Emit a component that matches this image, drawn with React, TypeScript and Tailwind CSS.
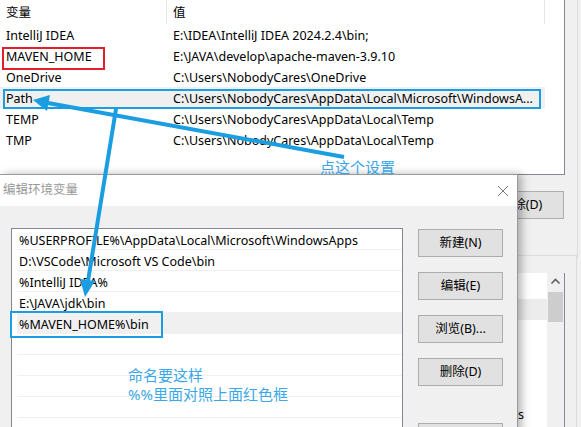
import React from 'react';

const font = { fontFamily: '"Noto Sans", "Noto Sans CJK SC", sans-serif' };

const vars = [
  { name: 'IntelliJ IDEA', value: 'E:\\IDEA\\IntelliJ IDEA 2024.2.4\\bin;' },
  { name: 'MAVEN_HOME', value: 'E:\\JAVA\\develop\\apache-maven-3.9.10' },
  { name: 'OneDrive', value: 'C:\\Users\\NobodyCares\\OneDrive' },
  { name: 'Path', value: 'C:\\Users\\NobodyCares\\AppData\\Local\\Microsoft\\WindowsA...' },
  { name: 'TEMP', value: 'C:\\Users\\NobodyCares\\AppData\\Local\\Temp' },
  { name: 'TMP', value: 'C:\\Users\\NobodyCares\\AppData\\Local\\Temp' },
];

const paths = [
  '%USERPROFILE%\\AppData\\Local\\Microsoft\\WindowsApps',
  'D:\\VSCode\\Microsoft VS Code\\bin',
  '%IntelliJ IDEA%',
  'E:\\JAVA\\jdk\\bin',
  '%MAVEN_HOME%\\bin',
  '',
  '',
  '',
  '',
];

function WinButton({ label }: { label?: string }) {
  return (
    <div className="w-[85px] h-[28px] shrink-0 flex items-center justify-center bg-[#e1e1e1] border border-[#adadad] text-[12.5px] text-black">
      {label}
    </div>
  );
}

function BackWindow() {
  return (
    <div className="absolute inset-0 bg-[#f0f0f0]">
      {/* user variables list */}
      <div className="absolute left-0 top-0 w-[565px] h-[175px] bg-white border-r border-b border-[#828790] text-[12.5px] text-black">
        <div className="flex h-[24px] items-center">
          <div className="w-[167px] pl-[6px] pt-[2px] h-full flex items-center border-r border-[#e5e5e5]">变量</div>
          <div className="w-[378px] pl-[6px] pt-[2px] h-full flex items-center border-r border-[#e5e5e5]">值</div>
        </div>
        {vars.map((v) => (
          <div
            key={v.name}
            className={`flex h-[21px] pt-[4px] items-center w-[545px] ${v.name === 'Path' ? 'bg-[#f0f0f0]' : ''}`}
          >
            <div className="w-[167px] pl-[6px] whitespace-nowrap">{v.name}</div>
            <div className="pl-[6px] whitespace-nowrap">{v.value}</div>
          </div>
        ))}
      </div>
      <div className="absolute left-[577px] top-0 w-px h-[258px] bg-[#dcdcdc]" />
      <div className="absolute left-[479px] top-[191px]">
        <WinButton label="删除(D)" />
      </div>
      {/* system variables group */}
      <div className="absolute left-[480px] top-[255px] w-[97px] h-[180px] border-t border-r border-[#dcdcdc]" />
      <div className="absolute left-[480px] top-[273px] w-[85px] h-[160px] bg-white border-r border-[#828790] flex">
        <div className="flex-1 flex flex-col">
          <div className="h-[26px]" />
          <div className="h-[21px] bg-[#ececec]" />
          <div className="flex-1 relative">
            <span className="absolute left-[38px] top-[89px] text-[12.5px] leading-none">s</span>
          </div>
        </div>
        <div className="w-[17px] bg-[#f0f0f0] flex flex-col items-center">
          <svg width="17" height="17" viewBox="0 0 17 17">
            <path d="M4.5 10.5 L8.5 6.5 L12.5 10.5" fill="none" stroke="#606060" strokeWidth="1.6" />
          </svg>
          <div className="mt-[2px] w-[15px] h-[30px] bg-[#cdcdcd]" />
        </div>
      </div>
    </div>
  );
}

function EditDialog() {
  return (
    <div className="absolute left-0 top-[174px] w-[518px] h-[260px] border-t border-r border-[#9a9a9a] shadow-[4px_0_8px_rgba(0,0,0,0.28)] flex flex-col overflow-hidden">
      <div className="h-[31px] shrink-0 bg-white flex items-center justify-between pl-[3px] pr-[8px]">
        <span className="text-[12.5px] text-[#999999]">编辑环境变量</span>
        <svg width="12" height="12" viewBox="0 0 12 12">
          <path d="M1 1 L11 11 M11 1 L1 11" stroke="#7a7a7a" strokeWidth="1" />
        </svg>
      </div>
      <div className="flex-1 bg-[#f0f0f0] flex pl-[11px] pt-[22px] gap-[15px]">
        <div className="w-[392px] h-[240px] shrink-0 bg-white border border-[#828790] text-[12.5px] text-black">
          {paths.map((p, i) => (
            <div
              key={i}
              className={`h-[21px] ml-[5px] pl-[2px] pt-[4px] flex items-center whitespace-nowrap border-b border-[#f0f0f0] ${i === 4 ? 'bg-[#f0f0f0]' : ''}`}
            >
              {p}
            </div>
          ))}
        </div>
        <div className="flex flex-col pt-[1px]">
          <div className="flex flex-col gap-[15px]">
            <WinButton label="新建(N)" />
            <WinButton label="编辑(E)" />
            <WinButton label="浏览(B)..." />
            <WinButton label="删除(D)" />
          </div>
          <div className="mt-[37px]">
            <WinButton />
          </div>
        </div>
      </div>
    </div>
  );
}

function Annotations() {
  const blue = '#1a9de1';
  return (
    <>
      <div className="absolute left-[2px] top-[47px] w-[103px] h-[23px] border-2 border-[#e0202a]" />
      <div className="absolute left-[3px] top-[89px] w-[538px] h-[20px] border-2 border-[#1a9de1]" />
      <div className="absolute left-[10px] top-[311px] w-[153px] h-[27px] border-2 border-[#1a9de1]" />
      <svg className="absolute inset-0 pointer-events-none" width="581" height="427">
        <line x1="344" y1="157" x2="48" y2="103" stroke={blue} strokeWidth="4" />
        <polygon points="33,100 50,95 47,111" fill={blue} />
        <line x1="116" y1="109" x2="88" y2="281" stroke={blue} strokeWidth="4" />
        <polygon points="85,297 95,281 80,279" fill={blue} />
      </svg>
      <div className="absolute left-[320px] top-[158px] text-[15px] leading-[18px] text-[#3aa4e4]">点这个设置</div>
      <div className="absolute left-[128px] top-[366px] text-[15px] leading-[19px] text-[#3aa8e8]">
        <div>命名要这样</div>
        <div>%%里面对照上面红色框</div>
      </div>
    </>
  );
}

export default function App() {
  return (
    <div className="relative w-[581px] h-[427px] overflow-hidden" style={font}>
      <BackWindow />
      <EditDialog />
      <Annotations />
    </div>
  );
}
